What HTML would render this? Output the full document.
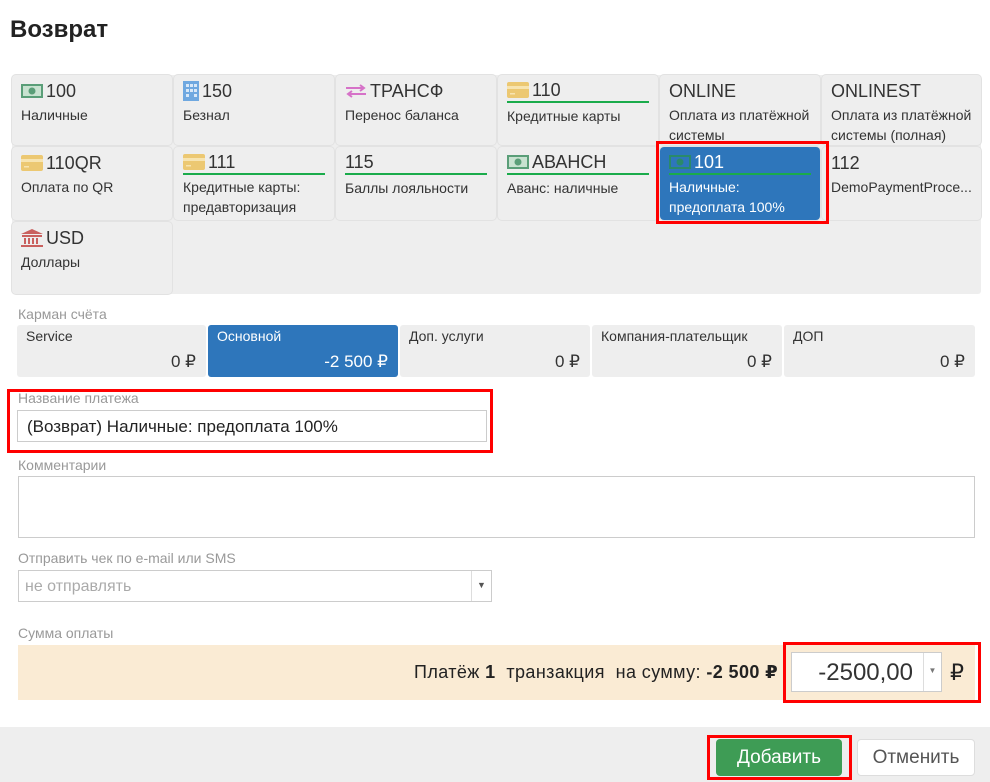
<!DOCTYPE html>
<html><head><meta charset="utf-8"><style>
*{box-sizing:border-box;margin:0;padding:0}
body{width:990px;height:782px;background:#fff;font-family:"Liberation Sans","DejaVu Sans",sans-serif;color:#222;position:relative;overflow:hidden}
.a{position:absolute}
.grid{left:12px;top:75px;width:969px;height:219px;background:#eee;border-radius:3px}
.t{position:absolute;width:160px;background:#eee;border-radius:4px;box-shadow:0 0 0 1px #e2e2e2;padding:4px 9px}
.t .c{font-size:18px;color:#333;height:24px;display:flex;align-items:center;gap:3px}
.t .c.g{border-bottom:2px solid #1aab4b;margin-bottom:2px}
.t .d{font-size:14px;color:#333;line-height:22px;margin-top:1px}
.sel{background:#2e76bb}
.sel .c,.sel .d{color:#fff}
.lbl{font-size:14px;color:#999}
.p{position:absolute;top:325px;height:52px;background:#eee;border-radius:3px;font-size:14px;color:#333}
.p .n{position:absolute;left:9px;top:3px}
.p .v{position:absolute;right:10px;top:27px;font-size:17px}
.red{position:absolute;border:3px solid #f00}
.inp{position:absolute;border:1px solid #ccc;background:#fff}
</style></head><body>
<div class="a" style="left:10px;top:16px;font-size:24px;font-weight:bold;color:#222">Возврат</div>
<div class="a grid"></div>
<div class="t" style="left:12px;top:75px;height:70px"><div class="c"><svg width="22" height="14"><rect width="22" height="14" fill="#5a9e78"/><rect x="2" y="2" width="18" height="10" fill="#c8e2d0"/><circle cx="11" cy="7" r="3.5" fill="#5a9e78"/></svg>100</div><div class="d">Наличные</div></div>
<div class="t" style="left:174px;top:75px;height:70px"><div class="c"><svg width="16" height="20"><rect width="16" height="20" fill="#6fa8e0"/><g fill="#d8e8f8"><rect x="3" y="3" width="3" height="3"/><rect x="7" y="3" width="3" height="3"/><rect x="11" y="3" width="3" height="3"/><rect x="3" y="8" width="3" height="3"/><rect x="7" y="8" width="3" height="3"/><rect x="11" y="8" width="3" height="3"/><rect x="3" y="13" width="3" height="3"/><rect x="11" y="13" width="3" height="3"/></g></svg>150</div><div class="d">Безнал</div></div>
<div class="t" style="left:336px;top:75px;height:70px"><div class="c"><svg width="22" height="14"><path d="M1 4h18M15 1l4 3-4 3M21 10H3M7 7l-4 3 4 3" stroke="#d672c8" stroke-width="2" fill="none"/></svg>ТРАНСФ</div><div class="d">Перенос баланса</div></div>
<div class="t" style="left:498px;top:75px;height:70px"><div class="c g"><svg width="22" height="16"><rect width="22" height="16" rx="2" fill="#ecc872"/><rect y="4" width="22" height="3" fill="#f7e4b0"/><rect x="3" y="11" width="5" height="1.5" fill="#f7e4b0"/></svg>110</div><div class="d">Кредитные карты</div></div>
<div class="t" style="left:660px;top:75px;height:70px"><div class="c">ONLINE</div><div class="d" style="line-height:20px;margin-top:2px">Оплата из платёжной системы</div></div>
<div class="t" style="left:822px;top:75px;height:70px;width:159px"><div class="c">ONLINEST</div><div class="d" style="line-height:20px;margin-top:2px">Оплата из платёжной системы (полная)</div></div>

<div class="t" style="left:12px;top:147px;height:73px"><div class="c"><svg width="22" height="16"><rect width="22" height="16" rx="2" fill="#ecc872"/><rect y="4" width="22" height="3" fill="#f7e4b0"/><rect x="3" y="11" width="5" height="1.5" fill="#f7e4b0"/></svg>110QR</div><div class="d">Оплата по QR</div></div>
<div class="t" style="left:174px;top:147px;height:73px"><div class="c g"><svg width="22" height="16"><rect width="22" height="16" rx="2" fill="#ecc872"/><rect y="4" width="22" height="3" fill="#f7e4b0"/><rect x="3" y="11" width="5" height="1.5" fill="#f7e4b0"/></svg>111</div><div class="d" style="line-height:20px">Кредитные карты: предавторизация</div></div>
<div class="t" style="left:336px;top:147px;height:73px"><div class="c g">115</div><div class="d">Баллы лояльности</div></div>
<div class="t" style="left:498px;top:147px;height:73px"><div class="c g"><svg width="22" height="14"><rect width="22" height="14" fill="#5a9e78"/><rect x="2" y="2" width="18" height="10" fill="#c8e2d0"/><circle cx="11" cy="7" r="3.5" fill="#5a9e78"/></svg>АВАНСН</div><div class="d">Аванс: наличные</div></div>
<div class="t sel" style="left:660px;top:147px;height:73px"><div class="c g"><svg width="22" height="14"><rect width="22" height="14" fill="#2a8a6a"/><rect x="2" y="2" width="18" height="10" fill="#2e76bb"/><circle cx="11" cy="7" r="3.5" fill="#2a8a6a"/></svg>101</div><div class="d" style="line-height:20px">Наличные: предоплата 100%</div></div>
<div class="t" style="left:822px;top:147px;height:73px;width:159px"><div class="c">112</div><div class="d">DemoPaymentProce...</div></div>
<div class="t" style="left:12px;top:222px;height:72px"><div class="c"><svg width="22" height="18"><path d="M11 0L22 5H0z" fill="#c9605e"/><rect x="1" y="6" width="20" height="2" fill="#c9605e"/><g fill="#c9605e"><rect x="3" y="9" width="2" height="6"/><rect x="7" y="9" width="2" height="6"/><rect x="11" y="9" width="2" height="6"/><rect x="15" y="9" width="2" height="6"/></g><rect x="0" y="16" width="22" height="2" fill="#c9605e"/></svg>USD</div><div class="d">Доллары</div></div>
<div class="red" style="left:656px;top:141px;width:173px;height:83px"></div>

<div class="a lbl" style="left:18px;top:306px">Карман счёта</div>
<div class="p" style="left:17px;width:189px"><span class="n">Service</span><span class="v">0 ₽</span></div>
<div class="p" style="left:208px;width:190px;background:#2e76bb;color:#fff"><span class="n">Основной</span><span class="v">-2 500 ₽</span></div>
<div class="p" style="left:400px;width:190px"><span class="n">Доп. услуги</span><span class="v">0 ₽</span></div>
<div class="p" style="left:592px;width:190px"><span class="n">Компания-плательщик</span><span class="v">0 ₽</span></div>
<div class="p" style="left:784px;width:191px"><span class="n">ДОП</span><span class="v">0 ₽</span></div>

<div class="a lbl" style="left:18px;top:390px">Название платежа</div>
<div class="inp" style="left:17px;top:410px;width:470px;height:32px;font-size:17px;padding:6px 9px;color:#222">(Возврат) Наличные: предоплата 100%</div>
<div class="red" style="left:7px;top:389px;width:486px;height:64px"></div>

<div class="a lbl" style="left:18px;top:457px">Комментарии</div>
<div class="inp" style="left:18px;top:476px;width:957px;height:62px"></div>

<div class="a lbl" style="left:18px;top:550px">Отправить чек по e-mail или SMS</div>
<div class="inp" style="left:18px;top:570px;width:474px;height:32px;font-size:16px;color:#aaa;padding:7px 6px">не отправлять<span style="position:absolute;right:0;top:0;width:20px;height:30px;border-left:1px solid #ddd;font-size:9px;color:#555;text-align:center;line-height:28px">▼</span></div>

<div class="a lbl" style="left:18px;top:625px">Сумма оплаты</div>
<div class="a" style="left:18px;top:645px;width:957px;height:55px;background:#faebd4"></div>
<div class="a" style="left:414px;top:662px;font-size:18px;letter-spacing:0.4px;color:#222;white-space:nowrap">Платёж <b>1</b>&nbsp; транзакция &nbsp;на сумму: <b>-2 500 ₽</b></div>
<div class="inp" style="left:791px;top:652px;width:151px;height:40px;font-size:24px;color:#333;padding:6px 28px 0 0;text-align:right">-2500,00<span style="position:absolute;right:0;top:0;width:18px;height:38px;border-left:1px solid #ddd;font-size:8px;color:#777;text-align:center;line-height:36px">▼</span></div>
<div class="a" style="left:950px;top:660px;font-size:22px;color:#222">₽</div>
<div class="red" style="left:783px;top:642px;width:198px;height:61px"></div>

<div class="a" style="left:0;top:727px;width:990px;height:55px;background:#eee"></div>
<div class="a" style="left:716px;top:739px;width:126px;height:37px;background:#3e9c55;border-radius:4px;color:#fff;font-size:19px;text-align:center;line-height:37px">Добавить</div>
<div class="red" style="left:707px;top:735px;width:145px;height:45px"></div>
<div class="a" style="left:857px;top:739px;width:118px;height:37px;background:#fff;border:1px solid #ddd;border-radius:4px;color:#555;font-size:19px;text-align:center;line-height:35px">Отменить</div>
</body></html>
